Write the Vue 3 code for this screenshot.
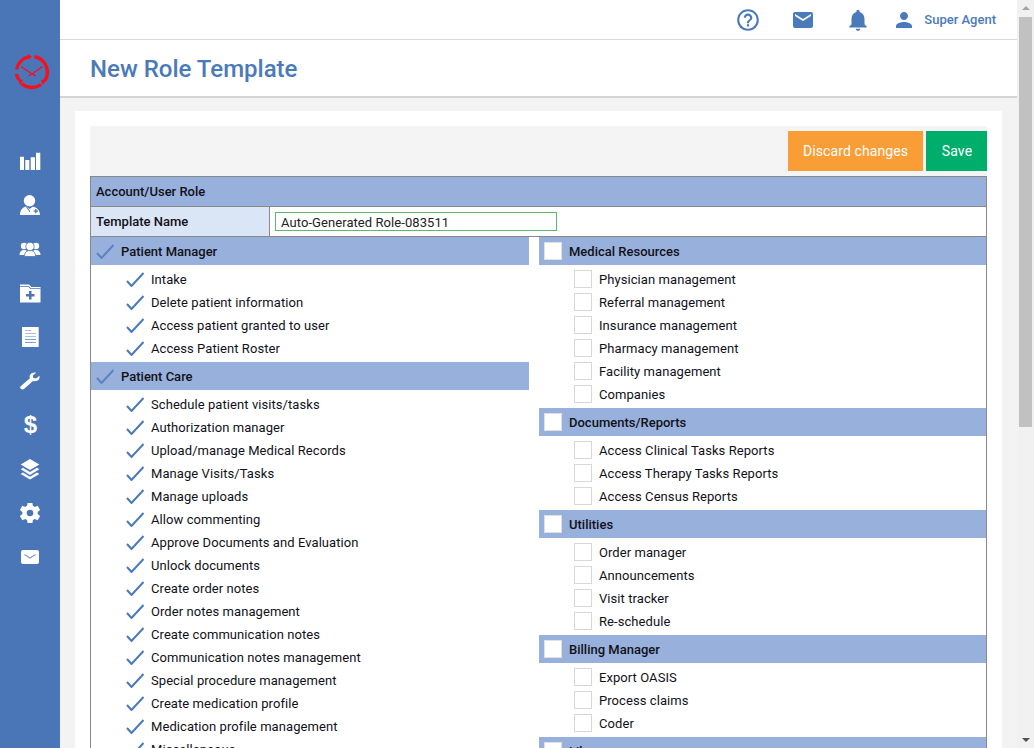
<script setup>
const left = [
  { title: 'Patient Manager', items: ['Intake', 'Delete patient information', 'Access patient granted to user', 'Access Patient Roster'] },
  { title: 'Patient Care', items: ['Schedule patient visits/tasks', 'Authorization manager', 'Upload/manage Medical Records', 'Manage Visits/Tasks', 'Manage uploads', 'Allow commenting', 'Approve Documents and Evaluation', 'Unlock documents', 'Create order notes', 'Order notes management', 'Create communication notes', 'Communication notes management', 'Special procedure management', 'Create medication profile', 'Medication profile management', 'Miscellaneous'] },
]
const right = [
  { title: 'Medical Resources', items: ['Physician management', 'Referral management', 'Insurance management', 'Pharmacy management', 'Facility management', 'Companies'] },
  { title: 'Documents/Reports', items: ['Access Clinical Tasks Reports', 'Access Therapy Tasks Reports', 'Access Census Reports'] },
  { title: 'Utilities', items: ['Order manager', 'Announcements', 'Visit tracker', 'Re-schedule'] },
  { title: 'Billing Manager', items: ['Export OASIS', 'Process claims', 'Coder'] },
  { title: 'Library', items: [] },
]
</script>

<template>
  <div class="page">
    <aside class="side">
      <svg class="logo" width="36" height="36" viewBox="0 0 36 36" fill="none" stroke="#f5101c">
        <path d="M2.600 15.500A15.500 15.500 0 0 1 14.500 2.900M20.500 2.700A15.500 15.500 0 0 1 30.800 26.500M27 30.500A15.500 15.500 0 0 1 7.500 29.500M4.500 25.500A15.500 15.500 0 0 1 2.600 20" stroke-width="3.400" />
        <path fill="#f5101c" stroke="none" d="M14 0l4 2.800-4 3zM34 25l-5.500 6-1.500-5zM3 24l6 2-3 5z" />
        <path d="M7 12.500L18 20L28.500 12.500M14.500 22L18 20L22 22" stroke-width="1.200" />
      </svg>
      <nav class="nav">
        <svg class="ni" viewBox="0 0 22 22"><path fill="#fff" d="M1 6.700h4V20H1zM6.300 10h4v10h-4zM11.700 7.300H16V20h-4.300zM17 2.700h4.300V20H17z" /></svg>
        <svg class="ni" viewBox="0 0 22 22"><circle cx="10.500" cy="6.700" r="5.700" fill="#fff" /><path fill="#fff" d="M1 21c0-5 2.500-7.500 6-8.500L10.500 15 14 12.500c3.500 1 7 3.500 7 8.500z" /><path fill="#4a76b8" d="M14.700 16.500h1.500V15h1.300v1.500H19v1.300h-1.500v1.500h-1.300v-1.500h-1.500zM7.500 13l3 3 .5 2h-1l-.3-1.500-2.700-3z" /></svg>
        <svg class="ni" viewBox="0 0 22 16"><circle cx="5" cy="5" r="3.200" fill="#fff" /><circle cx="17" cy="5" r="3.200" fill="#fff" /><path fill="#fff" d="M0.500 14c0-3 1.500-5 4.500-5s4 2 4 5zM13 14c0-3 1-5 4-5s4.500 2 4.500 5z" /><circle cx="11" cy="5.500" r="4.200" fill="#fff" stroke="#4a76b8" stroke-width="0.800" /><path fill="#fff" stroke="#4a76b8" stroke-width="0.800" d="M5.500 15.500c0-4 2-6 5.500-6s5.500 2 5.500 6z" /></svg>
        <svg class="ni" viewBox="0 0 22 22"><path fill="#fff" d="M1 2.500h9l2.500 2.500h9v15.500H1z" /><path fill="#4a76b8" d="M1 4.300h9l2 2h9.500V7H11.500l-2-2H1z" /><path fill="#4a76b8" d="M10 9h2.500v3h3v2.500h-3v3H10v-3H7V12h3z" /></svg>
        <svg class="ni" viewBox="0 0 22 22"><path fill="#fff" d="M3 1h16.700v20H3z" /><path fill="#a9bfe0" d="M6 4h6v1H6zM6 7h11v1H6zM6 10h11v1H6z" /><path fill="#7c9dcf" d="M6 13h11v1H6zM6 16h11v1H6z" /></svg>
        <svg class="ni" viewBox="0 0 22 22"><path fill="#fff" transform="translate(0.500 2) scale(.95 .82)" d="M21 4.500c.6 2.500-.2 4.800-2 6-1.600 1-3.300 1.100-4.800.5L5 20.500c-1 1-2.500 1-3.500 0s-1-2.500 0-3.500l9.500-9.300c-.6-1.500-.5-3.200.5-4.800 1.200-1.800 3.600-2.700 6-2l-3.500 3.500.5 3 3 .5z" /></svg>
        <span class="dollar">$</span>
        <svg class="ni" viewBox="0 0 22 22"><path fill="#fff" d="M11 1l9.300 5.500L11 12 1.700 6.500zM4 9.700L11 14l7-4.300 2.300 1.500L11 17l-9.300-5.800zM4 14.500l7 4.300 7-4.300 2.300 1.500L11 21.500 1.700 16z" /></svg>
        <svg class="ni" viewBox="2.500 2 20 20"><path fill="#fff" d="M19.400 13c.1-.3.100-.7.100-1s0-.7-.1-1l2.300-1.800-2.200-3.800-2.700 1.100c-.5-.4-1.100-.7-1.700-1L14.700 3h-4.400l-.4 2.500c-.6.300-1.200.6-1.700 1L5.500 5.400 3.300 9.200 5.600 11c-.1.300-.1.700-.1 1s0 .7.1 1l-2.300 1.800 2.200 3.800 2.700-1.100c.5.400 1.100.7 1.700 1l.4 2.500h4.400l.4-2.500c.6-.3 1.200-.6 1.700-1l2.700 1.100 2.200-3.800zM12.500 15a3 3 0 1 1 0-6 3 3 0 0 1 0 6z" /></svg>
        <svg class="ni" viewBox="0 0 22 18"><rect x="2" y="2" width="18" height="14" rx="2" fill="#fff" /><path d="M5.500 6.500L11 10l5.500-3.500" fill="none" stroke="#7c9dcf" stroke-width="1.200" /></svg>
      </nav>
    </aside>

    <div class="main">
      <header class="top">
        <svg class="ti help" viewBox="0 0 24 24"><path d="M11 18h2v-2h-2v2zm1-16C6.480 2 2 6.480 2 12s4.480 10 10 10 10-4.480 10-10S17.520 2 12 2zm0 18c-4.410 0-8-3.590-8-8s3.590-8 8-8 8 3.590 8 8-3.590 8-8 8zm0-14c-2.210 0-4 1.790-4 4h2c0-1.100.9-2 2-2s2 .9 2 2c0 2-3 1.750-3 5h2c0-2.250 3-2.500 3-5 0-2.210-1.790-4-4-4z" /></svg>
        <svg class="ti mail" viewBox="0 0 24 24"><path d="M20 4H4c-1.100 0-1.990.9-1.990 2L2 18c0 1.100.9 2 2 2h16c1.100 0 2-.9 2-2V6c0-1.100-.9-2-2-2zm0 4l-8 5-8-5V6l8 5 8-5v2z" /></svg>
        <svg class="ti bell" viewBox="0 0 24 24"><path d="M12 22c1.100 0 2-.9 2-2h-4c0 1.100.89 2 2 2zm6-6v-5c0-3.070-1.640-5.640-4.500-6.320V4c0-.83-.67-1.500-1.500-1.500s-1.500.67-1.500 1.500v.68C7.630 5.360 6 7.920 6 11v5l-2 2v1h16v-1l-2-2z" /></svg>
        <svg class="ti user" viewBox="0 0 24 24"><path d="M12 12c2.210 0 4-1.790 4-4s-1.790-4-4-4-4 1.790-4 4 1.790 4 4 4zm0 2c-2.670 0-8 1.340-8 4v2h16v-2c0-2.660-5.330-4-8-4z" /></svg>
        <span class="agent">Super Agent</span>
      </header>
      <div class="titlebar"><h1>New Role Template</h1></div>
      <div class="content">
        <div class="card">
          <div class="actions">
            <button class="btn discard">Discard changes</button>
            <button class="btn save">Save</button>
          </div>
          <div class="table">
            <div class="thead">Account/User Role</div>
            <div class="namerow">
              <div class="namelabel">Template Name</div>
              <div class="namecell"><input class="nameinput" value="Auto-Generated Role-083511" /></div>
            </div>
            <div class="cols">
              <div class="col lcol">
                <section v-for="s in left" :key="s.title" class="sec">
                  <div class="sechead">
                    <svg class="chk hchk" viewBox="0 0 18 15"><path d="M1 9l4.500 5L17.500 1" /></svg>
                    <span>{{ s.title }}</span>
                  </div>
                  <ul class="rows">
                    <li v-for="i in s.items" :key="i" class="row">
                      <svg class="chk" viewBox="0 0 18 15"><path d="M1 9l4.500 5L17.500 1" /></svg>
                      <span>{{ i }}</span>
                    </li>
                  </ul>
                </section>
              </div>
              <div class="col rcol">
                <section v-for="s in right" :key="s.title" class="sec">
                  <div class="sechead rhead">
                    <span class="box hbox"></span>
                    <span>{{ s.title }}</span>
                  </div>
                  <ul class="rows">
                    <li v-for="i in s.items" :key="i" class="row rrow">
                      <span class="box rbox"></span>
                      <span>{{ i }}</span>
                    </li>
                  </ul>
                </section>
              </div>
            </div>
          </div>
        </div>
      </div>
    </div>

    <div class="scrollbar">
      <span class="arrow up"></span>
      <div class="track"><div class="thumb"></div></div>
      <span class="arrow down"></span>
    </div>
  </div>
</template>

<style>
html, body { margin: 0; overflow: hidden; }
</style>

<style scoped>
.page {
  display: flex;
  width: 1034px;
  height: 748px;
  overflow: hidden;
  font-family: Roboto, "Liberation Sans", sans-serif;
  font-size: 13px;
  color: #111118;
  background: #f3f3f3;
}
.side {
  width: 60px;
  flex: none;
  background: #4a76b8;
  display: flex;
  flex-direction: column;
  align-items: center;
}
.logo { margin-top: 54px; margin-left: 3px; flex: none; }
.nav {
  margin-top: 60px;
  display: flex;
  flex-direction: column;
  align-items: center;
}
.ni { width: 22px; height: 22px; margin-bottom: 22px; display: block; }
.dollar {
  height: 22px;
  margin-bottom: 22px;
  margin-left: 1px;
  font: bold 24px/22px "Liberation Sans", sans-serif;
  color: #fff;
}
.main {
  flex: 1;
  min-width: 0;
  display: flex;
  flex-direction: column;
}
.top {
  height: 39px;
  flex: none;
  background: #fff;
  border-bottom: 1px solid #d9d9d9;
  display: flex;
  align-items: center;
  padding-right: 21px;
  justify-content: flex-end;
}
.ti { fill: #4a7ab9; display: block; flex: none; }
.help { width: 26px; height: 26px; margin-right: 30px; }
.mail { width: 24px; height: 24px; margin-right: 30px; }
.bell { width: 26px; height: 26px; margin-right: 21px; }
.user { width: 24px; height: 24px; margin-right: 8px; }
.agent { font-size: 13px; font-weight: 500; color: #4a7ab9; }
.titlebar {
  height: 54px;
  flex: none;
  background: #fff;
  border-bottom: 2px solid #d4d4d4;
  display: flex;
  align-items: center;
  padding: 2px 0 0 30px;
}
h1 {
  margin: 0;
  font-size: 24px;
  font-weight: 500;
  color: #4a7ab9;
}
.content { flex: 1; min-height: 0; padding: 13px 15px 0; }
.card { background: #fff; padding: 15px; height: 100%; box-sizing: border-box; }
.actions {
  background: #f4f4f4;
  height: 50px;
  display: flex;
  justify-content: flex-end;
  align-items: flex-start;
  gap: 3px;
  padding-top: 5px;
  box-sizing: border-box;
}
.btn {
  height: 40px;
  border: 0;
  color: #fff;
  font: 14px Roboto, sans-serif;
  letter-spacing: 0.1px;
  padding: 0;
}
.discard { width: 135px; background: #f99d36; }
.save { width: 61px; background: #00ae6b; padding-left: 1px; }
.table { border: 1px solid #888; border-bottom: 0; }
.thead {
  height: 29px;
  line-height: 29px;
  background: #98b0dc;
  padding-left: 5px;
  font-weight: 500;
  border-bottom: 1px solid #888;
}
.namerow { display: flex; height: 29px; border-bottom: 1px solid #888; }
.namelabel {
  width: 179px;
  line-height: 29px;
  padding-left: 5px;
  box-sizing: border-box;
  background: #dae5f6;
  border-right: 1px solid #888;
  font-weight: 500;
}
.namecell { flex: 1; padding: 5px 0 0 5px; }
.nameinput {
  display: block;
  width: 282px;
  height: 19px;
  box-sizing: border-box;
  border: 1px solid #5cb870;
  outline: 0;
  padding: 1px 5px 0;
  font: 13px Roboto, sans-serif;
  letter-spacing: 0.07px;
  color: #222;
}
.cols { display: flex; gap: 10px; }
.lcol { width: 438px; flex: none; }
.rcol { flex: 1; min-width: 0; }
.sechead {
  height: 28px;
  background: #98b0dc;
  display: flex;
  align-items: center;
  padding-left: 5px;
  font-weight: 500;
  gap: 7px;
}
.rows { list-style: none; margin: 0; padding: 3px 0 2px; }
.row {
  height: 23px;
  display: flex;
  align-items: center;
  padding-left: 35px;
  gap: 7px;
  letter-spacing: 0.07px;
}
.chk { width: 18px; height: 15px; flex: none; fill: none; stroke: #4a7ab9; stroke-width: 2; }
.hchk { stroke: #5a83c0; }
.box {
  width: 18px;
  height: 18px;
  box-sizing: border-box;
  background: #fff;
  border: 1px solid #d8d8d8;
  flex: none;
}
.rbox { margin-top: -1px; }
.hbox { border-color: #e0e0e0; }
.scrollbar {
  width: 17px;
  flex: none;
  background: #f1f1f1;
  display: flex;
  flex-direction: column;
  align-items: center;
}
.track { flex: 1; width: 100%; padding: 0 2px; box-sizing: border-box; }
.thumb { height: 410px; background: #c1c1c1; }
.arrow { height: 17px; width: 100%; flex: none; position: relative; }
.arrow::after {
  content: "";
  position: absolute;
  left: 5px;
  border-left: 4px solid transparent;
  border-right: 4px solid transparent;
}
.up::after { top: 6px; border-bottom: 4px solid #a3a3a3; }
.down::after { top: 7px; border-top: 4px solid #505050; }
</style>
